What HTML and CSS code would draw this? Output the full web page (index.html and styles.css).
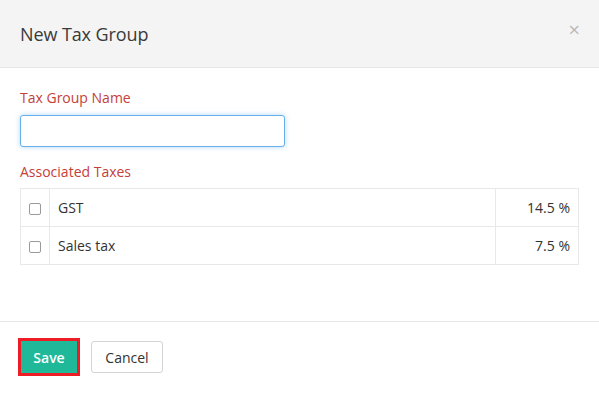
FILE: index.html
```html
<!DOCTYPE html>
<html lang="en">
<head>
    <meta charset="UTF-8">
    <title>New Tax Group</title>
    <link rel="stylesheet" href="styles.css">
</head>
<body>
    <div class="modal">
        <div class="modal-header">
            <h4 class="modal-title">New Tax Group</h4>
            <span class="close">&times;</span>
        </div>
        <div class="modal-body">
            <label class="field-label" for="groupName">Tax Group Name</label>
            <input type="text" id="groupName" class="text-input">
            <div class="field-label taxes-label">Associated Taxes</div>
            <table class="tax-table">
                <tr>
                    <td class="check-cell"><input type="checkbox" class="check"></td>
                    <td>GST</td>
                    <td class="rate-cell">14.5 %</td>
                </tr>
                <tr>
                    <td class="check-cell"><input type="checkbox" class="check"></td>
                    <td>Sales tax</td>
                    <td class="rate-cell">7.5 %</td>
                </tr>
            </table>
        </div>
        <div class="modal-footer">
            <button class="btn btn-save">Save</button>
            <button class="btn btn-cancel">Cancel</button>
        </div>
    </div>
</body>
</html>
```
FILE: styles.css
```css
body {
    margin: 0;
    background-color: #ffffff;
    font-family: 'Open Sans', sans-serif;
    color: #333333;
}
.modal {
    width: 599px;
    height: 394px;
    display: flex;
    flex-direction: column;
}
.modal-header {
    background-color: #f4f4f4;
    border-bottom: 1px solid #e6e6e6;
    height: 68px;
    box-sizing: border-box;
    display: flex;
    align-items: center;
    justify-content: space-between;
    padding: 0 20px;
}
.modal-title {
    margin: 0;
    font-size: 18px;
    font-weight: 400;
    color: #3a3a3a;
    letter-spacing: -0.1px;
}
.close {
    color: #b9b9b9;
    font-size: 20px;
    line-height: 1;
    margin-top: -8px;
    margin-right: -1px;
}
.modal-body {
    padding: 20px 20px 0;
    height: 254px;
    box-sizing: border-box;
    border-bottom: 1px solid #e6e6e6;
}
.field-label {
    display: block;
    color: #c4403a;
    font-size: 14px;
    line-height: 20px;
    margin-bottom: 7px;
}
.taxes-label {
    margin-bottom: 6px;
}
.text-input {
    display: block;
    width: 265px;
    height: 32px;
    box-sizing: border-box;
    border: 1px solid #66afe9;
    border-radius: 3px;
    box-shadow: 0 0 5px rgba(102, 175, 233, 0.5);
    outline: none;
    margin-bottom: 15px;
}
.tax-table {
    width: 559px;
    border-collapse: collapse;
    font-size: 14px;
}
.tax-table td {
    border: 1px solid #e8e8e8;
    height: 37px;
    padding: 0 8px;
}
.check-cell {
    width: 12px;
}
.rate-cell {
    width: 66px;
    text-align: right;
}
.check {
    appearance: none;
    width: 12px;
    height: 12px;
    border: 1px solid #9a9a9a;
    border-radius: 2px;
    margin: 3px 0 0;
    display: block;
}
.modal-footer {
    display: flex;
    align-items: center;
    gap: 11px;
    padding: 16px 18px 0;
}
.btn {
    font-family: 'Open Sans', sans-serif;
    font-size: 14px;
    border-radius: 3px;
    cursor: pointer;
}
.btn-save {
    background-color: #1fb99a;
    color: #ffffff;
    font-weight: 600;
    border: 3px solid #ee1c24;
    border-radius: 0;
    width: 62px;
    height: 38px;
}
.btn-cancel {
    background-color: #ffffff;
    color: #333333;
    border: 1px solid #d4d4d4;
    width: 72px;
    height: 32px;
}
```
